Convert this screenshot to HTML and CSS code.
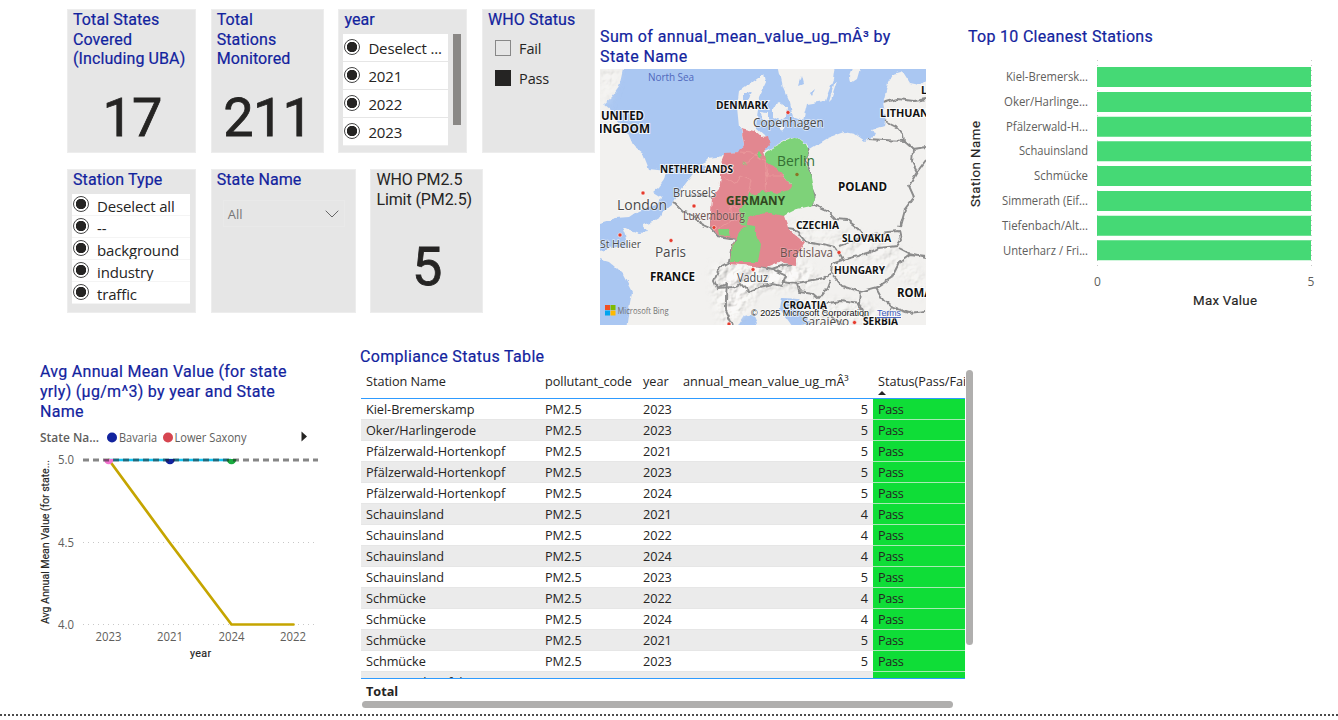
FILE: index.html
```html
<!DOCTYPE html>
<html lang="en">
<head>
<meta charset="utf-8">
<title>Air quality report</title>
<link rel="stylesheet" href="styles.css">
</head>
<body>
<main class="report">
  <div class="upper">
    <div class="tiles">
      <div class="tile-row">
        <section class="tile w129"><h2>Total States Covered (Including UBA)</h2><div class="big">17</div></section>
        <section class="tile w113"><h2>Total<br>Stations Monitored</h2><div class="big">211</div></section>
        <section class="tile w129">
          <h2>year</h2>
          <div class="year-body">
            <ul class="slicer year">
              <li><i class="radio"></i><span>Deselect ...</span></li>
              <li><i class="radio"></i><span>2021</span></li>
              <li><i class="radio"></i><span>2022</span></li>
              <li><i class="radio"></i><span>2023</span></li>
            </ul>
            <div class="thumb"></div>
          </div>
        </section>
        <section class="tile w113">
          <h2>WHO Status</h2>
          <ul class="checks">
            <li><i class="box"></i><span>Fail</span></li>
            <li><i class="box on"></i><span>Pass</span></li>
          </ul>
        </section>
      </div>
      <div class="tile-row">
        <section class="tile w129">
          <h2>Station Type</h2>
          <ul class="slicer type">
            <li><i class="radio"></i><span>Deselect all</span></li>
            <li><i class="radio"></i><span>--</span></li>
            <li><i class="radio"></i><span>background</span></li>
            <li><i class="radio"></i><span>industry</span></li>
            <li><i class="radio"></i><span>traffic</span></li>
          </ul>
        </section>
        <section class="tile w145">
          <h2>State Name</h2>
          <div class="dropdown"><span>All</span><svg width="14" height="8" viewBox="0 0 14 8"><path d="M.7.7 7 7 13.300.7" fill="none" stroke="#666"/></svg></div>
        </section>
        <section class="tile w113"><h2 class="dark">WHO PM2.5 Limit (PM2.5)</h2><div class="big five">5</div></section>
      </div>
    </div>

    <section class="map">
      <h2>Sum of annual_mean_value_ug_mÂ³ by State Name</h2>
      <svg width="326" height="256" viewBox="600 69 326 256">
        <defs>
          <filter id="relief" x="0" y="0" width="100%" height="100%">
            <feTurbulence type="fractalNoise" baseFrequency=".09" numOctaves="4" seed="8" result="n"/>
            <feDiffuseLighting in="n" surfaceScale="3" diffuseConstant="1.35" lighting-color="#f4f3f0" result="l"><feDistantLight azimuth="225" elevation="48"/></feDiffuseLighting>
            <feComposite in="l" in2="SourceGraphic" operator="in"/>
          </filter>
          <filter id="rough" x="-5%" y="-5%" width="110%" height="110%">
            <feTurbulence type="fractalNoise" baseFrequency=".13" numOctaves="2" seed="4"/>
            <feDisplacementMap in="SourceGraphic" scale="5" xChannelSelector="R" yChannelSelector="G"/>
          </filter>
          <filter id="soft"><feGaussianBlur stdDeviation="5"/></filter>
          <mask id="hills" maskUnits="userSpaceOnUse" x="600" y="69" width="326" height="256">
            <g filter="url(#soft)" fill="#fff"><path d="M712 268 760 260 805 262 822 280 800 288 760 290 740 318 722 325 715 300Z"/><path d="M785 222 830 230 885 238 926 275 926 300 890 270 840 255 800 240Z" opacity=".5"/><path d="M795 300 865 300 890 325 820 325Z" opacity=".6"/><path d="M600 69 620 69 605 110Z" opacity=".5"/></g>
          </mask>
        </defs>
        <rect x="600" y="69" width="326" height="256" fill="#aac7f2"/>
        <g filter="url(#rough)">
          <g fill="#f2f1ef">
            <path d="M595 64H624L622 74 619 87 612 97 604 104 611 110 616 119 627 131 634 147 643 154 649 169 666 171 664 180 659 187 653 192 661 197 659 204 646 208 638 211 629 217 616 218 600 223 595 224Z"/>
            <path d="M595 251 600 250 616 247 629 248 626 235 623 227 630 230 639 233 648 232 643 225 656 220 661 217 663 212 672 205 679 193 686 183 692 175 699 167 708 158 724 156 729 153 740 152 744 144 741 130 739 127 737 107 739 91 749 84 764 73 766 83 759 98 758 109 756 128 764 135 768 143 764 151 774 147 785 140 797 137 806 143 810 149 828 138 845 132 855 134 865 141 875 135 872 130 884 126 886 117 883 103 888 83 893 75 903 72 910 83 920 85 932 76V330H760L753 314 744 316 735 330H626L629 308 632 292 623 275 616 268 609 262 595 258Z"/>
            <path d="M778 64H835L833 80 825 101 807 104 803 121 793 117 790 103 783 87Z"/>
            <path d="M772 108 780 103 787 107 786 117 780 121 772 118ZM761 111 768 112 768 119 762 120ZM778 125 785 126 782 131Z"/>
            <path d="M854 65H861L857 79 851 83 850 77ZM834 84 837 81 831 100 829 102Z"/>
          </g>
          <g fill="#aac7f2">
            <path d="M782 298 799 299 804 305 800 310 812 325 795 330 780 309ZM798 86 801 76 803 84ZM810 93 815 89 812 96ZM839 274 851 269 846 275Z"/>
            <path d="M744 94 751 91 748 100 744 100ZM700 166 706 165 703 174 699 172Z"/>
          </g>
        </g>
        <g mask="url(#hills)"><rect x="600" y="69" width="326" height="256" fill="#fff" filter="url(#relief)" opacity=".6"/></g>
        <g filter="url(#rough)" fill="none" stroke="#8c8c8c" stroke-width="1.900">
          <path d="M674 202 684 212 696 217 702 225 711 229 718 236 736 239 731 250 729 262 720 267 714 281 717 288 727 284 726 296 726 310 733 325M690 197 700 194 712 197M711 229 711 220 716 227"/>
          <path d="M717 288 732 287 741 284 748 292 760 287 772 284 781 286 786 276 772 269 760 266 746 263 730 263M772 269 783 265 793 264"/>
          <path d="M781 215 797 207 812 204 828 211 836 219 847 220 859 229 864 237 875 234 888 232 899 231 901 240 897 246 879 248 868 253 858 256 843 260 835 247 823 244 805 241 795 229 787 228M864 237 852 241 839 246"/>
          <path d="M812 204 815 196 810 184 810 171 805 160 810 149M868 139 884 140 904 141 913 149 912 162 917 172 909 186 914 197 905 209 900 227"/>
          <path d="M883 103 897 99 914 101 926 99M885 121 897 127 903 134 904 141M912 149 926 147M917 172 926 160"/>
          <path d="M843 260 832 264 831 273 842 286 860 292 878 287 891 278 899 262 910 254 926 256M899 248 909 253 926 257M831 273 823 278 803 282 797 283 782 281M797 283 799 292 812 294 818 299 828 287 831 279M860 292 859 304 841 301 829 303 820 307 834 319 845 325M876 287 883 300 891 307 886 319 892 325M891 307 909 313 926 311M859 304 864 315 870 325"/>
        </g>
        <g filter="url(#rough)">
          <path fill="#e28790" d="M741 128 754 131 761 137 768 136 770 144 764 151 768 161 777 166 783 176 793 185 798 203 784 216 789 230 805 243 797 255 797 265 778 262 766 267 730 264 731 250 736 239 718 235 710 226 712 197 719 189 721 177 721 163 725 153 739 152 744 144Z"/>
          <path fill="#7ed279" d="M766 152 785 141 797 137 806 144 809 152 804 162 810 172 813 189 815 200 811 206 797 209 783 216 770 213 756 214 748 219 747 226 741 225 739 209 746 203 749 192 757 196 762 190 776 194 788 190 792 184 782 175 776 167 765 162Z"/>
          <path fill="#7ed279" d="M740 231 747 226 755 227 757 237 761 244 758 262 730 262 732 249ZM718 229 728 229 730 236 719 235ZM756 154 759 151 762 156 758 157ZM742 163 746 162 745 165Z"/>
          <g fill="none" stroke="#f0a6a4" stroke-width=".8" opacity=".65"><path d="M723 177 735 184 740 176 751 181 748 192M741 152 752 153 765 162 767 176 783 176M739 209 730 205 733 220 718 229M766 190 768 165M757 153 744 164"/></g>
        </g>
        <g fill="#e53b2d" stroke="#fff" stroke-width=".5"><circle cx="643" cy="193" r="2"/><circle cx="694" cy="206" r="2"/><circle cx="714" cy="227.500" r="2"/><circle cx="620" cy="235" r="2"/><circle cx="671" cy="240.500" r="2"/><circle cx="788" cy="112.500" r="2"/><circle cx="839" cy="252.500" r="2"/><circle cx="753" cy="269.500" r="2"/><circle cx="854.500" cy="322.500" r="2"/><circle cx="729" cy="324" r="2"/></g>
        <circle cx="797" cy="174.500" r="1.700" fill="#8a7525"/>
        <g class="mt">
          <text x="648" y="81" font-size="10" fill="#5068bc" textLength="46">North Sea</text>
          <g class="city">
            <text x="753" y="127" font-size="12.500" textLength="71" lengthAdjust="spacingAndGlyphs">Copenhagen</text>
            <text x="777" y="166" font-size="14" class="berlin" textLength="38" lengthAdjust="spacingAndGlyphs">Berlin</text>
            <text x="617" y="210" font-size="15" textLength="50" lengthAdjust="spacingAndGlyphs">London</text>
            <text x="673" y="197" font-size="12" textLength="43" lengthAdjust="spacingAndGlyphs">Brussels</text>
            <text x="683" y="220" font-size="12" textLength="62" lengthAdjust="spacingAndGlyphs" class="lux">Luxembourg</text>
            <text x="600" y="248" font-size="11.500" textLength="41" lengthAdjust="spacingAndGlyphs">St Helier</text>
            <text x="655" y="257" font-size="15" textLength="31" lengthAdjust="spacingAndGlyphs">Paris</text>
            <text x="780" y="257" font-size="12" textLength="53" lengthAdjust="spacingAndGlyphs" class="lux">Bratislava</text>
            <text x="737" y="282" font-size="12" textLength="31" lengthAdjust="spacingAndGlyphs">Vaduz</text>
            <text x="802" y="326" font-size="12" textLength="47" lengthAdjust="spacingAndGlyphs">Sarajevo</text>
          </g>
          <g class="country">
            <text x="601" y="120" font-size="12" textLength="43" lengthAdjust="spacingAndGlyphs">UNITED</text>
            <text x="591" y="132.500" font-size="12" textLength="59" lengthAdjust="spacingAndGlyphs">KINGDOM</text>
            <text x="716" y="109" font-size="10.500" textLength="52" lengthAdjust="spacingAndGlyphs">DENMARK</text>
            <text x="660" y="173" font-size="10.500" textLength="73" lengthAdjust="spacingAndGlyphs">NETHERLANDS</text>
            <text x="726" y="204.500" font-size="12" class="ger" textLength="59" lengthAdjust="spacingAndGlyphs">GERMANY</text>
            <text x="838" y="191" font-size="12" textLength="49" lengthAdjust="spacingAndGlyphs">POLAND</text>
            <text x="880" y="117" font-size="10.500" textLength="60" lengthAdjust="spacingAndGlyphs">LITHUANIA</text>
            <text x="921" y="94" font-size="10.500">LATVIA</text>
            <text x="796" y="229" font-size="10.500" textLength="43" lengthAdjust="spacingAndGlyphs">CZECHIA</text>
            <text x="842" y="242" font-size="10.500" textLength="49" lengthAdjust="spacingAndGlyphs">SLOVAKIA</text>
            <text x="834" y="274" font-size="10.500" textLength="51" lengthAdjust="spacingAndGlyphs">HUNGARY</text>
            <text x="650" y="280.500" font-size="12" textLength="45" lengthAdjust="spacingAndGlyphs">FRANCE</text>
            <text x="897" y="296.500" font-size="11.500" textLength="56" lengthAdjust="spacingAndGlyphs">ROMANIA</text>
            <text x="783" y="309" font-size="10.500" textLength="44" lengthAdjust="spacingAndGlyphs">CROATIA</text>
            <text x="863" y="325" font-size="10.500" textLength="35" lengthAdjust="spacingAndGlyphs">SERBIA</text>
          </g>
        </g>
        <path fill="#f25022" d="M605 305h5v5h-5z"/><path fill="#7fba00" d="M610.500 305h5v5h-5z"/><path fill="#00a4ef" d="M605 310.500h5v5h-5z"/><path fill="#ffb900" d="M610.500 310.500h5v5h-5z"/>
        <text class="seg" x="617.500" y="314" font-size="9" fill="#737373" textLength="51" lengthAdjust="spacingAndGlyphs">Microsoft Bing</text>
        <text class="legal" x="751" y="316" textLength="118" lengthAdjust="spacingAndGlyphs">© 2025 Microsoft Corporation</text>
        <text class="legal terms" x="877" y="316" textLength="24" lengthAdjust="spacingAndGlyphs">Terms</text>
      </svg>
    </section>

    <section class="bars">
      <h2>Top 10 Cleanest Stations</h2>
      <svg width="370" height="260" viewBox="968 55 370 260">
        <path d="M1097.500 60V270M1311.500 60V270" stroke="#c8c8c8" stroke-dasharray="1 4"/>
        <g fill="#45d975">
          <path d="M1097 67h214v20h-214zM1097 91.900h214v20h-214zM1097 116.700h214v20h-214zM1097 141.200h214v20h-214zM1097 166h214v20h-214zM1097 190.900h214v20h-214zM1097 215.700h214v20h-214zM1097 240.200h214v20h-214z"/>
        </g>
        <g class="seg axis" font-size="12">
          <text x="1006" y="81" textLength="82" lengthAdjust="spacingAndGlyphs">Kiel-Bremersk...</text>
          <text x="1004" y="106" textLength="84" lengthAdjust="spacingAndGlyphs">Oker/Harlinge...</text>
          <text x="1006" y="131" textLength="82" lengthAdjust="spacingAndGlyphs">Pfälzerwald-H...</text>
          <text x="1019" y="155" textLength="69" lengthAdjust="spacingAndGlyphs">Schauinsland</text>
          <text x="1034" y="180" textLength="54" lengthAdjust="spacingAndGlyphs">Schmücke</text>
          <text x="1002" y="205" textLength="86" lengthAdjust="spacingAndGlyphs">Simmerath (Eif...</text>
          <text x="1002" y="230" textLength="86" lengthAdjust="spacingAndGlyphs">Tiefenbach/Alt...</text>
          <text x="1003" y="255" textLength="85" lengthAdjust="spacingAndGlyphs">Unterharz / Fri...</text>
          <text x="1097.500" y="286" text-anchor="middle">0</text><text x="1311" y="286" text-anchor="middle">5</text>
        </g>
        <g class="din" font-size="13.300">
          <text x="1193" y="305" textLength="64">Max Value</text>
          <text transform="translate(980 207) rotate(-90)" textLength="86">Station Name</text>
        </g>
      </svg>
    </section>
  </div>

  <div class="lower">
    <section class="trend">
      <h2>Avg Annual Mean Value (for state yrly) (µg/m^3) by year and State Name</h2>
      <svg width="300" height="240" viewBox="30 425 300 240">
        <g class="seg axis" font-size="12">
          <text x="40" y="442" font-weight="600" textLength="59" lengthAdjust="spacingAndGlyphs">State Na...</text>
          <text x="119" y="442" textLength="38" lengthAdjust="spacingAndGlyphs">Bavaria</text>
          <text x="174.500" y="442" textLength="72" lengthAdjust="spacingAndGlyphs">Lower Saxony</text>
          <text x="58" y="464" textLength="16" lengthAdjust="spacingAndGlyphs">5.0</text><text x="58" y="547" textLength="16" lengthAdjust="spacingAndGlyphs">4.5</text><text x="58" y="629" textLength="16" lengthAdjust="spacingAndGlyphs">4.0</text>
          <text x="95.500" y="641" textLength="26" lengthAdjust="spacingAndGlyphs">2023</text><text x="157" y="641" textLength="26" lengthAdjust="spacingAndGlyphs">2021</text><text x="218.500" y="641" textLength="26" lengthAdjust="spacingAndGlyphs">2024</text><text x="280" y="641" textLength="26" lengthAdjust="spacingAndGlyphs">2022</text>
        </g>
        <circle cx="112" cy="437.500" r="5" fill="#12239e"/><circle cx="168" cy="437.500" r="5" fill="#d64550"/>
        <path d="M301.500 431.500 307 436.500 301.500 441.500Z" fill="#252423"/>
        <path d="M83 542.500H318M83 624.500H318" stroke="#c8c8c8" stroke-dasharray="1 4"/>
        <path d="M109 460 170 543 231.500 624.500H293.500" fill="none" stroke="#c5a500" stroke-width="2.700" stroke-linecap="round" stroke-linejoin="round"/>
        <path d="M109 460H231" stroke="#15c6f4" stroke-width="2.500"/>
        <path d="M103.800 459a4.900 5.200 0 0 0 9.800 0z" fill="#f472d0"/><path d="M165.100 459a4.900 5.200 0 0 0 9.800 0z" fill="#12239e"/><path d="M226.600 459a4.900 5.200 0 0 0 9.800 0z" fill="#1aab40"/>
        <path d="M83 460H318" stroke="#222" stroke-opacity=".55" stroke-width="3" stroke-dasharray="6 4"/>
        <g class="din" font-size="10.700"><text x="190" y="657" textLength="21">year</text><text transform="translate(49 624) rotate(-90)" textLength="164">Avg Annual Mean Value (for state...</text></g>
      </svg>
    </section>

    <section class="compliance">
      <h2>Compliance Status Table</h2>
      <div class="grid-wrap">
        <div class="grid-main">
          <div class="grid-clip">
            <table>
              <colgroup><col class="c1"><col class="c2"><col class="c3"><col class="c4"><col class="c5"></colgroup>
              <thead><tr><th>Station Name</th><th>pollutant_code</th><th>year</th><th>annual_mean_value_ug_mÂ³</th><th class="sorted">Status(Pass/Fail)</th></tr></thead>
              <tbody>
                <tr><td>Kiel-Bremerskamp</td><td>PM2.5</td><td>2023</td><td>5</td><td>Pass</td></tr>
                <tr><td>Oker/Harlingerode</td><td>PM2.5</td><td>2023</td><td>5</td><td>Pass</td></tr>
                <tr><td>Pfälzerwald-Hortenkopf</td><td>PM2.5</td><td>2021</td><td>5</td><td>Pass</td></tr>
                <tr><td>Pfälzerwald-Hortenkopf</td><td>PM2.5</td><td>2023</td><td>5</td><td>Pass</td></tr>
                <tr><td>Pfälzerwald-Hortenkopf</td><td>PM2.5</td><td>2024</td><td>5</td><td>Pass</td></tr>
                <tr><td>Schauinsland</td><td>PM2.5</td><td>2021</td><td>4</td><td>Pass</td></tr>
                <tr><td>Schauinsland</td><td>PM2.5</td><td>2022</td><td>4</td><td>Pass</td></tr>
                <tr><td>Schauinsland</td><td>PM2.5</td><td>2024</td><td>4</td><td>Pass</td></tr>
                <tr><td>Schauinsland</td><td>PM2.5</td><td>2023</td><td>5</td><td>Pass</td></tr>
                <tr><td>Schmücke</td><td>PM2.5</td><td>2022</td><td>4</td><td>Pass</td></tr>
                <tr><td>Schmücke</td><td>PM2.5</td><td>2024</td><td>4</td><td>Pass</td></tr>
                <tr><td>Schmücke</td><td>PM2.5</td><td>2021</td><td>5</td><td>Pass</td></tr>
                <tr><td>Schmücke</td><td>PM2.5</td><td>2023</td><td>5</td><td>Pass</td></tr>
                <tr><td>Simmerath (Eifel)</td><td>PM2.5</td><td>2021</td><td>5</td><td>Pass</td></tr>
              </tbody>
            </table>
          </div>
          <div class="total">Total</div>
          <div class="hbar"></div>
        </div>
        <div class="vbar"></div>
      </div>
    </section>
  </div>
  <div class="page-edge"></div>
</main>
</body>
</html>
```
FILE: styles.css
```css
* { box-sizing: border-box; }
body { margin: 0; background: #fff; color: #252423; font-family: "Open Sans", "Noto Sans", sans-serif; }
h2 { margin: 0; font: 400 16px/19.5px Roboto, sans-serif; letter-spacing: .25px; color: #12239e; -webkit-text-stroke: .2px; }
ul { margin: 0; padding: 0; list-style: none; }
svg { display: block; }
.report { width: 1338px; height: 720px; overflow: hidden; display: flex; flex-direction: column; }
.upper { display: flex; height: 345px; flex: none; padding-left: 67px; }
.tiles { width: 533px; flex: none; padding-top: 9px; display: flex; flex-direction: column; gap: 16px; }
.tile-row { display: flex; gap: 14.7px; }
.tile { height: 144px; background: #e6e6e6; border: 1px solid #ededed; padding: 0 2px 0 5px; display: flex; flex-direction: column; }
.tile h2 { flex: none; letter-spacing: .1px; }
.w129 { width: 129px; } .w113 { width: 113px; } .w145 { width: 145px; }
.tile h2.dark { color: #252423; -webkit-text-stroke: 0; letter-spacing: -.1px; }
.big { font: 400 54px/64px Roboto, sans-serif; -webkit-text-stroke: .8px; text-align: center; margin-top: 17px; padding-right: 2px; letter-spacing: -.8px; }
.five { margin-top: 26px; padding-right: 3px; }

.radio { width: 16px; height: 16px; border: 1px solid #444; border-radius: 50%; background: radial-gradient(circle, #252423 0 4.9px, #fff 5.5px); flex: none; }
.year-body { display: flex; margin-top: 4px; margin-left: -1px; }
.slicer li { display: flex; align-items: center; gap: 8px; background: #fff; font-size: 15px; letter-spacing: -.15px; white-space: nowrap; overflow: hidden; }
.slicer span { line-height: 20px; padding-top: 1px; }
.year { width: 105px; height: 112px; border-bottom: 1px solid #eee; }
.year li { height: 27px; margin-bottom: 1px; padding-left: 1px; }
.thumb { width: 8px; height: 91px; margin-left: 5px; background: #8a8886; }
.type { margin: 4px 0 0 -1px; width: 118px; }
.type li { height: 22px; border-bottom: 1px solid #f4f4f4; padding-left: 1px; }
.type span { padding-top: 3px; }

.checks { padding: 9px 0 0 7px; display: flex; flex-direction: column; gap: 10px; }
.checks li { display: flex; align-items: center; gap: 8px; height: 20px; font-size: 14.5px; letter-spacing: -.15px; }
.box { width: 16px; height: 16px; border: 1px solid #888; margin-bottom: 1px; }
.box.on { background: #252423; border-color: #252423; }
.dropdown { margin: 10px 8px 0 6px; height: 27px; padding: 1px 5px 0 4px; border: 1px solid #e9e9e9; display: flex; justify-content: space-between; align-items: center; font-size: 13px; color: #777; }

.map { width: 368px; flex: none; padding-top: 27px; }
.map h2 { width: 326px; margin-bottom: 3px; letter-spacing: .38px; }
.mt, .seg { font-family: "Open Sans", "Noto Sans", sans-serif; }
.city { fill: #4a4a4a; paint-order: stroke; stroke: #fff; stroke-opacity: .6; stroke-width: 1.5px; }
.berlin { fill: #347033; stroke: none; }
.lux { fill: #6a514d; stroke-opacity: .2; }
.country { font-weight: 700; fill: #111; paint-order: stroke; stroke: #fff; stroke-opacity: .8; stroke-width: 2px; }
.ger { fill: #32481f; stroke: none; }
.legal { font: 9px "Liberation Sans", sans-serif; fill: #111; paint-order: stroke; stroke: #fff; stroke-opacity: .7; stroke-width: 1.5px; }
.terms { fill: #3757b8; text-decoration: underline; }
.bars { padding-top: 27px; }
.bars h2 { height: 28px; letter-spacing: .3px; }
.axis { fill: #605e5c; }
.din { font-family: Roboto, sans-serif; fill: #252423; stroke: #252423; stroke-width: .15px; }

.lower { display: flex; height: 369px; flex: none; padding-left: 30px; }
.trend { width: 330px; flex: none; padding-top: 17px; }
.trend h2 { width: 280px; height: 63px; line-height: 20px; padding-left: 10px; letter-spacing: .3px; }
.compliance { padding-top: 2px; width: 620px; }
.compliance h2 { height: 23px; letter-spacing: .33px; }
.grid-wrap { display: flex; }
.grid-main { width: 605px; padding-left: 1px; flex: none; }
.grid-clip { height: 309px; overflow: hidden; border-bottom: 1px solid #2e9bff; }
table { width: 620px; table-layout: fixed; border-collapse: separate; border-spacing: 0; font-size: 12.7px; letter-spacing: -.05px; }
.c1 { width: 179px; } .c2 { width: 98px; } .c3 { width: 40px; } .c4 { width: 195px; } .c5 { width: 108px; }
th { height: 29px; padding: 2px 0 0 5px; text-align: left; vertical-align: top; font-weight: 400; line-height: 18px; border-bottom: 1px solid #2e9bff; white-space: nowrap; }
.sorted { position: relative; }
.sorted::after { content: ""; position: absolute; left: 5px; bottom: 3px; border: 4.500px solid transparent; border-top: 0; border-bottom: 4px solid #252423; }
td { height: 21px; padding: 0 5px; line-height: 18px; border-bottom: 1px solid #e6e6e6; white-space: nowrap; }
tbody tr:nth-child(even) { background: #ebebeb; }
td:nth-child(4) { text-align: right; }
td:nth-child(5) { background: #0fdd37; border-color: #a8eab4; letter-spacing: -.35px; }
.total { height: 22px; padding: 3px 5px; font-size: 12.7px; line-height: 18px; font-weight: 700; }
.hbar { width: 591px; height: 7px; border-radius: 4px; background: #b0afae; margin-left: 1px; }
.vbar { width: 7px; height: 275px; border-radius: 4px; background: #b0afae; margin-left: 1px; }
.page-edge { border-top: 2px dotted #4b4b4b; }
```
